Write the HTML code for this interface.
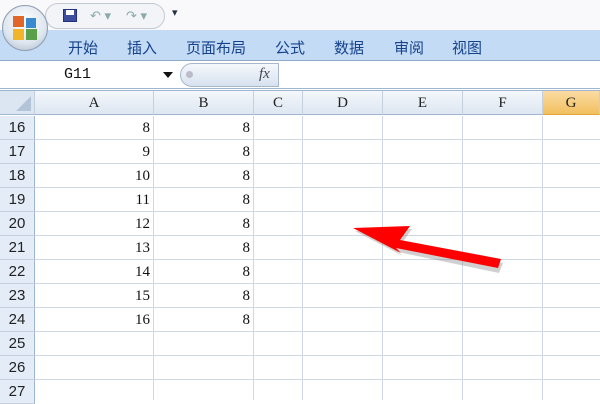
<!DOCTYPE html>
<html><head><meta charset="utf-8"><style>
*{margin:0;padding:0;box-sizing:border-box}
body{width:600px;height:400px;overflow:hidden;background:#fff;position:relative;font-family:"Liberation Sans","Noto Sans CJK SC",sans-serif}
.a{position:absolute}
.tab{position:absolute;top:37px;font-size:15px;color:#15428b}
.hd{position:absolute;top:91px;height:24px;background:linear-gradient(#f4f7fb,#dde6f1);border-right:1px solid #c5d0de;border-bottom:1px solid #9eb6ce;font-family:"Liberation Serif",serif;font-size:15px;color:#222;text-align:center;line-height:24px}
.rn{position:absolute;left:0;width:35px;height:24px;background:#e4ecf7;border-right:1px solid #9eb6ce;border-bottom:1px solid #c5d0de;font-size:15px;color:#222;text-align:center;line-height:24px}
.v{position:absolute;height:24px;line-height:24px;text-align:right;font-family:"Liberation Serif",serif;font-size:15px;color:#111}
.vl{position:absolute;top:116px;height:284px;width:1px;background:#d0d7e5}
.hl{position:absolute;left:35px;width:565px;height:1px;background:#d0d7e5}
</style></head><body>
<div class="a" style="left:0;top:0;width:600px;height:30px;background:#f9f9fb"></div>
<div class="a" style="left:45px;top:3px;width:120px;height:26px;border:1px solid #c3cad4;border-radius:13px;background:#f2f4f7"></div>
<div class="a" style="left:63px;top:9px;width:14px;height:13px;background:#3d4e9c;border:1px solid #243080"></div>
<div class="a" style="left:66px;top:10px;width:8px;height:5px;background:#fff"></div>
<div class="a" style="left:90px;top:8px;font-size:13px;color:#8aa">↶ ▾</div>
<div class="a" style="left:126px;top:8px;font-size:13px;color:#8aa">↷ ▾</div>
<div class="a" style="left:172px;top:6px;font-size:11px;color:#234">▾</div>
<div class="a" style="left:0;top:30px;width:600px;height:31px;background:#c4dbf6;border-bottom:1px solid #8fa9c9"></div>
<div class="a" style="left:2px;top:5px;width:46px;height:46px;border-radius:50%;background:radial-gradient(circle at 50% 35%,#fff,#dde5ee 60%,#a9b8c9);border:1px solid #8f9fb3"></div>
<div class="a" style="left:13px;top:16px;width:11px;height:11px;background:#e0662a"></div>
<div class="a" style="left:26px;top:18px;width:10px;height:10px;background:#3a8ad0"></div>
<div class="a" style="left:13px;top:29px;width:11px;height:11px;background:#f0b52a"></div>
<div class="a" style="left:26px;top:29px;width:11px;height:11px;background:#5aa04a"></div>
<div class="tab" style="left:68px">开始</div>
<div class="tab" style="left:127px">插入</div>
<div class="tab" style="left:186px">页面布局</div>
<div class="tab" style="left:275px">公式</div>
<div class="tab" style="left:334px">数据</div>
<div class="tab" style="left:394px">审阅</div>
<div class="tab" style="left:452px">视图</div>
<div class="a" style="left:0;top:62px;width:600px;height:27px;background:#fff;border-bottom:1px solid #9eb6ce"></div>
<div class="a" style="left:64px;top:66px;font-family:'Liberation Mono',monospace;font-size:15px;color:#111">G11</div>
<div class="a" style="left:163px;top:72px;width:0;height:0;border-left:5px solid transparent;border-right:5px solid transparent;border-top:6px solid #111"></div>
<div class="a" style="left:180px;top:63px;width:99px;height:24px;border:1px solid #a7b8cc;border-radius:12px 0 0 12px;background:linear-gradient(#f5f8fb,#d7e2ef)"></div>
<div class="a" style="left:186px;top:71px;width:7px;height:7px;border-radius:50%;background:#bbc"></div>
<div class="a" style="left:259px;top:66px;font-family:'Liberation Serif',serif;font-style:italic;font-size:15px;color:#445">fx</div>
<div class="a" style="left:0;top:90px;width:600px;height:1px;background:#9eb6ce"></div>
<div class="hd" style="left:0;width:35px;background:#dce6f3"></div>
<div class="a" style="left:16px;top:96px;width:0;height:0;border-left:15px solid transparent;border-bottom:15px solid #b4c4d8"></div>
<div class="hd" style="left:35px;width:119px">A</div>
<div class="hd" style="left:154px;width:100px">B</div>
<div class="hd" style="left:254px;width:49px">C</div>
<div class="hd" style="left:303px;width:80px">D</div>
<div class="hd" style="left:383px;width:80px">E</div>
<div class="hd" style="left:463px;width:80px">F</div>
<div class="hd" style="left:543px;width:57px;background:linear-gradient(#fbdca4,#f2bf5e);border-bottom-color:#e5a43c">G</div>
<div class="vl" style="left:153px"></div><div class="vl" style="left:253px"></div><div class="vl" style="left:302px"></div><div class="vl" style="left:382px"></div><div class="vl" style="left:462px"></div><div class="vl" style="left:542px"></div>
<div class="hl" style="top:139px"></div><div class="hl" style="top:163px"></div><div class="hl" style="top:187px"></div><div class="hl" style="top:211px"></div><div class="hl" style="top:235px"></div><div class="hl" style="top:259px"></div><div class="hl" style="top:283px"></div><div class="hl" style="top:307px"></div><div class="hl" style="top:331px"></div><div class="hl" style="top:355px"></div><div class="hl" style="top:379px"></div>
<div class="rn" style="top:116px">16</div><div class="rn" style="top:140px">17</div><div class="rn" style="top:164px">18</div><div class="rn" style="top:188px">19</div><div class="rn" style="top:212px">20</div><div class="rn" style="top:236px">21</div><div class="rn" style="top:260px">22</div><div class="rn" style="top:284px">23</div><div class="rn" style="top:308px">24</div><div class="rn" style="top:332px">25</div><div class="rn" style="top:356px">26</div><div class="rn" style="top:380px">27</div>
<div class="v" style="left:35px;width:115px;top:116px">8</div><div class="v" style="left:154px;width:96px;top:116px">8</div>
<div class="v" style="left:35px;width:115px;top:140px">9</div><div class="v" style="left:154px;width:96px;top:140px">8</div>
<div class="v" style="left:35px;width:115px;top:164px">10</div><div class="v" style="left:154px;width:96px;top:164px">8</div>
<div class="v" style="left:35px;width:115px;top:188px">11</div><div class="v" style="left:154px;width:96px;top:188px">8</div>
<div class="v" style="left:35px;width:115px;top:212px">12</div><div class="v" style="left:154px;width:96px;top:212px">8</div>
<div class="v" style="left:35px;width:115px;top:236px">13</div><div class="v" style="left:154px;width:96px;top:236px">8</div>
<div class="v" style="left:35px;width:115px;top:260px">14</div><div class="v" style="left:154px;width:96px;top:260px">8</div>
<div class="v" style="left:35px;width:115px;top:284px">15</div><div class="v" style="left:154px;width:96px;top:284px">8</div>
<div class="v" style="left:35px;width:115px;top:308px">16</div><div class="v" style="left:154px;width:96px;top:308px">8</div>
<svg class="a" style="left:0;top:0" width="600" height="400"><g>
<polygon points="353,228 410,226 400,240 501,260 497,270 396,249 401,253" fill="#777" opacity="0.35" transform="translate(2,3)"/>
<polygon points="353,228 410,226 400,240 501,259 498,268 396,248 401,253" fill="#f00"/></g></svg>
</body></html>
